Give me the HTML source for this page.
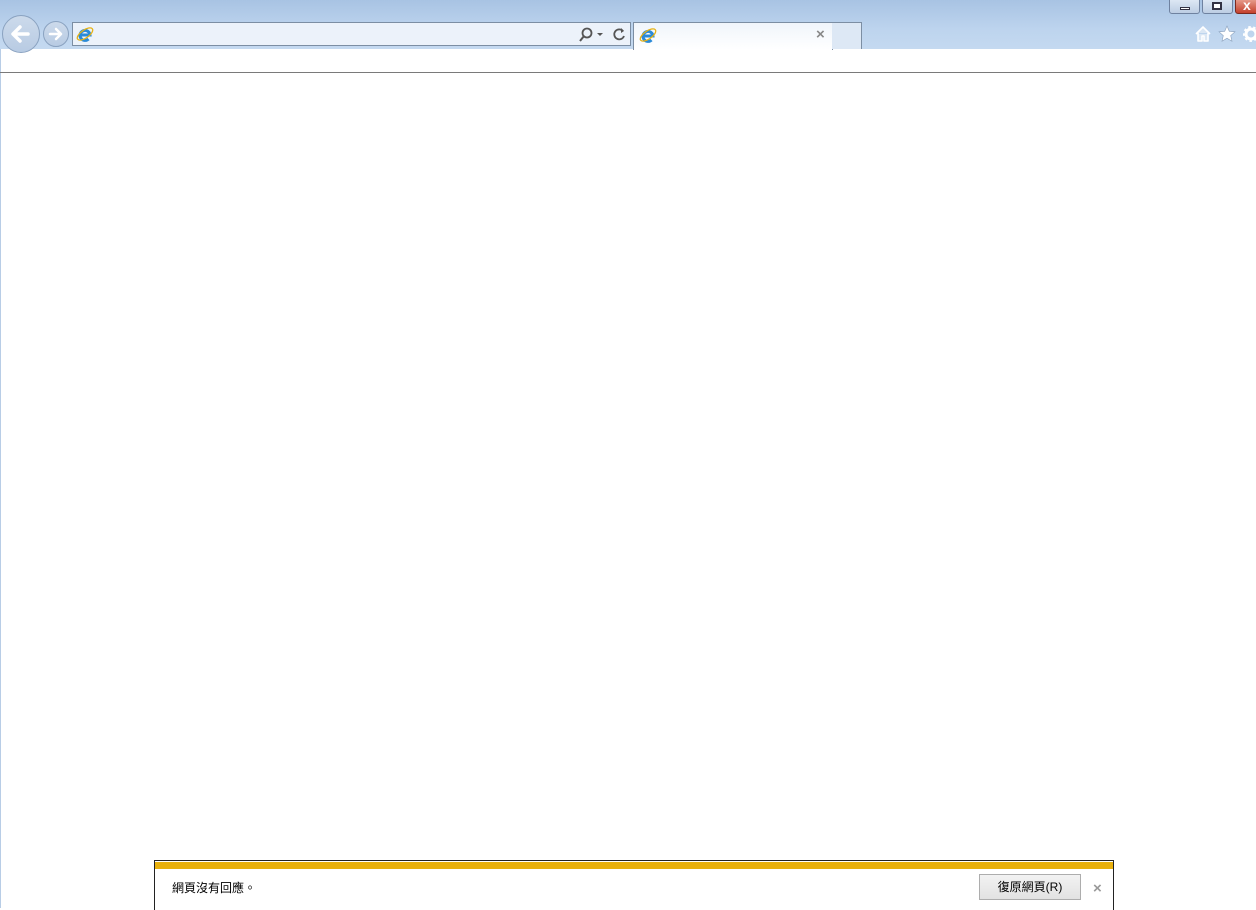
<!DOCTYPE html>
<html><head><meta charset="utf-8"><style>
*{margin:0;padding:0;box-sizing:border-box}
body{width:1256px;height:908px;overflow:hidden;background:#fff;position:relative;font-family:"Liberation Sans","Noto Sans CJK TC",sans-serif}
.top{position:absolute;left:0;top:0;width:1256px;height:49px;background:linear-gradient(#a8c3e3,#bdd4ee 60%,#c4d9f0)}
.abs{position:absolute}
</style></head><body>
<div class="top"></div>
<div class="abs" style="left:0;top:49px;width:1px;height:859px;background:#b8cde6"></div>
<div class="abs" style="left:0;top:72px;width:1256px;height:1px;background:#7a7a7a"></div>
<!-- back/forward -->
<div class="abs" style="left:2px;top:15px;width:38px;height:38px;border-radius:50%;border:1px solid #8aa2c0;background:linear-gradient(#ccdaeb,#b8cbe3)"></div>
<svg class="abs" style="left:8px;top:22px" width="26" height="24"><path d="M20 12H6M12 5L5 12l7 7" stroke="#fff" stroke-width="3.5" fill="none" stroke-linecap="round" stroke-linejoin="round"/></svg>
<div class="abs" style="left:43px;top:21px;width:26px;height:26px;border-radius:50%;border:1px solid #8aa2c0;background:linear-gradient(#ccdaeb,#b8cbe3)"></div>
<svg class="abs" style="left:47px;top:25px" width="18" height="18"><path d="M3 9h11M9 4l5 5-5 5" stroke="#fff" stroke-width="2.5" fill="none" stroke-linecap="round" stroke-linejoin="round"/></svg>
<!-- address -->
<div class="abs" style="left:72px;top:22px;width:559px;height:24px;border:1px solid #7c8ea3;background:#ecf2fa"></div>
<svg class="abs" style="left:76px;top:25px" width="18" height="18"><path d="M4 10h10a5 5 0 1 0-1.5 4" stroke="#2a8ad8" stroke-width="3" fill="none"/><ellipse cx="9" cy="9" rx="9" ry="4" transform="rotate(-35 9 9)" fill="none" stroke="#e6b214" stroke-width="1.3"/></svg>
<svg class="abs" style="left:578px;top:27px" width="50" height="16"><circle cx="9" cy="6" r="4.5" stroke="#555" stroke-width="1.8" fill="none"/><path d="M6 9l-4 5" stroke="#555" stroke-width="2"/><path d="M19 6h6l-3 3z" fill="#555"/><path d="M45 4a5 5 0 1 0 1 5" stroke="#555" stroke-width="1.8" fill="none"/><path d="M43 1l3 3-3 2" fill="#555"/></svg>
<!-- tab -->
<div class="abs" style="left:633px;top:22px;width:200px;height:28px;border:1px solid #7c8ea3;border-bottom:none;background:linear-gradient(#f0f5fb,#fff)"></div>
<svg class="abs" style="left:639px;top:26px" width="18" height="18"><path d="M4 10h10a5 5 0 1 0-1.5 4" stroke="#2a8ad8" stroke-width="3" fill="none"/><ellipse cx="9" cy="9" rx="9" ry="4" transform="rotate(-35 9 9)" fill="none" stroke="#e6b214" stroke-width="1.3"/></svg>
<div class="abs" style="left:816px;top:26px;font-size:15px;font-weight:bold;color:#888">×</div>
<div class="abs" style="left:832px;top:22px;width:30px;height:27px;border:1px solid #7c8ea3;border-left:none;border-bottom:none;background:#dde8f5"></div>
<!-- window buttons -->
<div class="abs" style="left:1169px;top:-2px;width:31px;height:16px;border:1px solid #6f82a0;border-radius:0 0 3px 3px;background:linear-gradient(#dfe9f5,#bccde3)"></div>
<div class="abs" style="left:1180px;top:7px;width:10px;height:3px;background:#fff;border:1px solid #334"></div>
<div class="abs" style="left:1202px;top:-2px;width:31px;height:16px;border:1px solid #6f82a0;border-radius:0 0 3px 3px;background:linear-gradient(#dfe9f5,#bccde3)"></div>
<div class="abs" style="left:1212px;top:2px;width:10px;height:8px;border:2px solid #334;background:#fff"></div>
<div class="abs" style="left:1235px;top:-2px;width:24px;height:16px;border:1px solid #7a2a20;border-radius:0 0 0 3px;background:linear-gradient(#e8a090,#c4402c)"></div>
<div class="abs" style="left:1243px;top:-3px;font-size:14px;font-weight:bold;color:#fff">x</div>
<!-- home star gear -->
<svg class="abs" style="left:1194px;top:25px" width="62" height="18"><path d="M2 9L9 2l7 7M4 8v8h4v-5h2v5h4V8" stroke="#fff" stroke-width="1.6" fill="#dbe7f4" stroke-linejoin="round"/><path d="M33 1l2.3 5.3 5.7.5-4.3 3.8 1.3 5.6-5-3-5 3 1.3-5.6-4.3-3.8 5.7-.5z" fill="#fff" stroke="#8aa0bc" stroke-width=".6"/><circle cx="57" cy="9" r="5" fill="none" stroke="#fff" stroke-width="3"/><circle cx="57" cy="9" r="7" fill="none" stroke="#fff" stroke-width="2" stroke-dasharray="2.5 2.5"/></svg>
<!-- notification -->
<div class="abs" style="left:154px;top:860px;width:960px;height:50px;border:1px solid #222;border-bottom:none;background:#fff"></div>
<div class="abs" style="left:155px;top:862px;width:958px;height:7px;background:#e8b00c"></div>
<div class="abs" style="left:172px;top:879px;font-size:12px;color:#000">網頁沒有回應。</div>
<div class="abs" style="left:979px;top:874px;width:102px;height:26px;border:1px solid #adadad;background:linear-gradient(#f2f2f2,#e2e2e2);font-size:12px;text-align:center;line-height:24px;color:#000">復原網頁(R)</div>
<div class="abs" style="left:1093px;top:880px;font-size:15px;font-weight:bold;color:#999">×</div>
</body></html>
